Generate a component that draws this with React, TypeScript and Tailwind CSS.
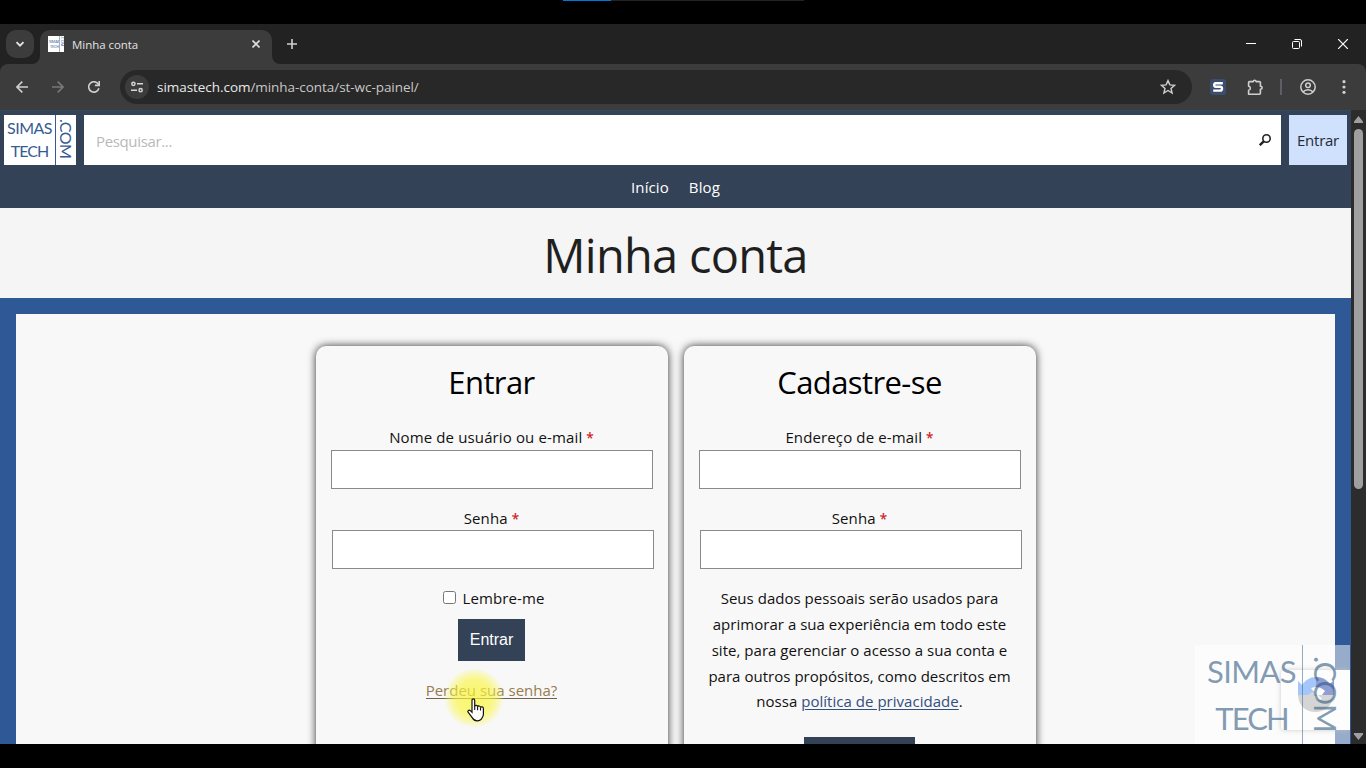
import type { ReactNode } from "react";

function TabStrip() {
  return (
    <div className="flex h-10 bg-[#222222]">
      <div className="flex w-10 items-start justify-start pl-1.5 pt-1.5">
        <button className="flex size-7 items-center justify-center rounded-[10px] bg-[#3c3c3c]">
          <svg width="10" height="8" viewBox="0 0 10 8" fill="none" stroke="#e3e3e3" strokeWidth="1.9">
            <path d="M1.500 2.200L5 5.700l3.500-3.500" />
          </svg>
        </button>
      </div>
      <div className="relative mt-1.5 flex h-[34px] w-[232px] items-start rounded-t-[10px] bg-[#3c3c3c] pl-2 pt-1.5">
        <svg className="absolute -left-2 bottom-0" width="8" height="8">
          <path d="M8 0v8H0a8 8 0 0 0 8-8z" fill="#3c3c3c" />
        </svg>
        <svg className="absolute -right-2 bottom-0" width="8" height="8">
          <path d="M0 0v8h8a8 8 0 0 1-8-8z" fill="#3c3c3c" />
        </svg>
        <div className="flex size-4 overflow-hidden bg-white text-[#6583ad]">
          <div className="flex w-[11px] flex-col justify-center pl-px text-[4px] font-semibold leading-[5px] tracking-[-0.3px]">
            <span>SIMAS</span>
            <span className="pl-px">TECH</span>
          </div>
          <span className="flex w-[5px] items-center border-l border-[#9db0ca] text-[4px] font-semibold leading-[4px] [writing-mode:vertical-rl]">
            .COM
          </span>
        </div>
        <span className="ml-2 w-[180px] whitespace-nowrap pt-px text-[11.5px] leading-4 tracking-[-0.05px] text-[#e3e3e3]">
          Minha conta
        </span>
        <svg className="mt-1 shrink-0" width="8" height="8" viewBox="0 0 8 8" stroke="#dedede" strokeWidth="1.6">
          <path d="M.5.5l7 7M7.500.5l-7 7" />
        </svg>
      </div>
      <svg className="ml-[15px] mt-[15px]" width="10" height="10" viewBox="0 0 10 10" stroke="#d0d0d0" strokeWidth="1.6">
        <path d="M5 0v10M0 5h10" />
      </svg>
      <div className="ml-auto flex gap-9 pr-[18px] pt-[15px]">
        <svg width="10" height="10" stroke="#fff">
          <path d="M0 4.500h10" />
        </svg>
        <svg width="10" height="10" fill="none" stroke="#fff">
          <rect x=".5" y="2.500" width="7" height="7" rx="1" />
          <path d="M2.500.5H8A1.500 1.500 0 0 1 9.500 2v5.500" />
        </svg>
        <svg width="10" height="10" stroke="#fff" strokeWidth="1.200">
          <path d="M0 0l10 10M10 0L0 10" />
        </svg>
      </div>
    </div>
  );
}

function Toolbar() {
  return (
    <div className="bg-[#222222]">
      <div className="flex h-[46px] items-center rounded-t-lg bg-[#3c3c3c] pl-4 pr-[15px]">
        <svg width="12" height="12" viewBox="0 0 12 12" fill="none" stroke="#cfcfcf" strokeWidth="1.6">
          <path d="M12 6H1M6.300.6L.9 6l5.400 5.400" />
        </svg>
        <svg className="ml-6" width="12" height="12" viewBox="0 0 12 12" fill="none" stroke="#787878" strokeWidth="1.6">
          <path d="M0 6h11M5.700.6L11.100 6l-5.400 5.400" />
        </svg>
        <svg className="ml-6" width="12" height="12" viewBox="0 0 12 12" fill="none" stroke="#cfcfcf" strokeWidth="1.6">
          <path d="M10.900 7.300A5.200 5.200 0 1 1 9.900 2.600L11 4.200" />
          <path d="M11.200 0v4.400H6.900" />
        </svg>
        <div className="ml-5 flex h-[34px] w-[1072px] items-center rounded-full bg-[#282828] pl-[5px] pr-4">
          <div className="flex size-6 items-center justify-center rounded-full bg-[#3c3c3c]">
            <svg width="12" height="12" viewBox="0 0 12 12" fill="none" stroke="#d6d6d6" strokeWidth="1.500">
              <circle cx="2.400" cy="2.800" r="1.600" />
              <path d="M6 2.800h6M0 9.200h6" />
              <circle cx="9.600" cy="9.200" r="1.600" />
            </svg>
          </div>
          <span className="ml-2 whitespace-nowrap text-[13.5px] leading-5 tracking-[-0.05px] text-[#c7c7c7]">
            <span className="text-[#e8e8e8]">simastech.com</span>/minha-conta/st-wc-painel/
          </span>
          <svg className="ml-auto" width="16" height="16" viewBox="0 0 16 16" fill="none" stroke="#cfcfcf" strokeWidth="1.400">
            <path d="M8 1.600l1.900 4.300 4.700.4-3.600 3.100 1.100 4.600L8 11.500 3.900 14 5 9.400 1.400 6.300l4.700-.4z" />
          </svg>
        </div>
        <svg className="ml-[18px]" width="16" height="16" viewBox="0 0 16 16">
          <rect width="16" height="16" rx="3" fill="#3b4e70" />
          <path
            d="M12.800 4.200H5.800Q4.200 4.200 4.200 6T5.800 7.800h4.400q1.800 0 1.800 1.900t-1.800 1.900H3.200"
            fill="none"
            stroke="#fff"
            strokeWidth="2.400"
          />
        </svg>
        <svg className="ml-[21px]" width="17" height="17" viewBox="0 0 17 17" fill="none" stroke="#cfcfcf" strokeWidth="1.600">
          <path
            d="M2.600 2.600h3.700C6.300.8 9 .8 9 2.600h3.400q1 0 1 1v3.600c2.300 0 2.300 3 0 3v4q0 1-1 1H1.600V11.300c2.300-.2 2.300-3.900 0-4.100V3.600q0-1 1-1z"
            strokeLinejoin="round"
          />
        </svg>
        <div className="ml-4 h-4 w-0.5 bg-[#5c5f63]" />
        <svg className="ml-[18px]" width="16" height="16" viewBox="0 0 16 16" fill="none" stroke="#cfcfcf" strokeWidth="1.500">
          <circle cx="8" cy="8" r="7.200" />
          <circle cx="8" cy="6.200" r="2.300" />
          <path d="M3 13c2.500-3 7.500-3 10 0" />
        </svg>
        <svg className="ml-[26px]" width="4" height="14" fill="#cfcfcf">
          <circle cx="2" cy="1.700" r="1.600" />
          <circle cx="2" cy="7" r="1.600" />
          <circle cx="2" cy="12.300" r="1.600" />
        </svg>
      </div>
    </div>
  );
}

function SiteHeader() {
  return (
    <header className="bg-[#334257]">
      <div className="flex h-[55px] gap-2 border-t border-[#34475f] px-1 pt-1">
        <div className="flex h-[50px] w-[72px] shrink-0 bg-white font-[Lato,sans-serif] text-[#365b91]">
          <div className="flex w-[51px] flex-col items-center pt-px text-[16px] leading-[23px]">
            <span className="tracking-[-0.5px]">SIMAS</span>
            <span className="tracking-[-0.9px]">TECH</span>
          </div>
          <div className="flex w-[21px] items-center justify-center border-l border-[#365b91]">
            <span className="pb-0.5 text-[16px] leading-[20px] tracking-[-0.6px] [writing-mode:vertical-rl]">.COM</span>
          </div>
        </div>
        <div className="flex h-[50px] flex-1 items-center justify-between bg-white pl-3 pr-2.5">
          <span className="pt-0.5 text-[15px] tracking-[-0.35px] text-[#b9b9b9]">Pesquisar...</span>
          <svg width="12" height="12" viewBox="0 0 12 12" fill="none" stroke="#222">
            <circle cx="7.500" cy="4.500" r="3.700" strokeWidth="1.600" />
            <path d="M4.700 7.400L.8 11.200" strokeWidth="2.400" />
          </svg>
        </div>
        <div className="flex h-[50px] w-[58px] items-center justify-center bg-[#cfe1fd] text-[15px] tracking-[-0.25px] text-[#252b33]">
          Entrar
        </div>
      </div>
      <nav className="flex h-[43px] items-center justify-center gap-5 pb-px pt-0.5 text-[15px] tracking-[0.1px] text-white">
        <span>Início</span>
        <span>Blog</span>
      </nav>
    </header>
  );
}

function Field({ label, shift }: { label: string; shift?: boolean }) {
  return (
    <div className="mb-[15px] flex flex-col items-center">
      <span
        className={
          shift
            ? "h-[26px] whitespace-nowrap pt-px text-[15px] leading-[26px] tracking-[0.13px]"
            : "h-[26px] whitespace-nowrap text-[15px] leading-[26px] tracking-[0.13px]"
        }
      >
        {label} <span className="text-[13.5px] font-semibold leading-none text-[#d01f26]">*</span>
      </span>
      <div
        className={
          shift
            ? "ml-0.5 h-[39px] w-[322px] border border-[#8a8a8a] bg-white"
            : "h-[39px] w-[322px] border border-[#8a8a8a] bg-white"
        }
      />
    </div>
  );
}

function Card({ title, children }: { title: string; children: ReactNode }) {
  return (
    <section className="h-[480px] w-[352px] rounded-t-[10px] bg-[#f8f8f8] shadow-[0_0_8px_rgba(0,0,0,0.8)]">
      <h2 className="h-[78px] whitespace-nowrap pt-[14px] text-center text-[31px] leading-[44px] tracking-[-0.6px] text-black">
        {title}
      </h2>
      {children}
    </section>
  );
}

function LoginCard() {
  return (
    <Card title="Entrar">
      <Field label="Nome de usuário ou e-mail" />
      <Field label="Senha" shift />
      <div className="flex h-[34px] items-start justify-center gap-[7px] pl-1 text-[15px] leading-[28px] tracking-[0.1px]">
        <span className="mt-[7px] size-[13px] rounded-[2.5px] border border-[#767676] bg-white" />
        <span>Lembre-me</span>
      </div>
      <div className="mt-px flex flex-col items-center">
        <button className="h-[42px] w-[67px] bg-[#334257] font-['Liberation_Sans',Arial,sans-serif] text-base text-white">
          Entrar
        </button>
        <span className="relative mt-5 h-[18px] whitespace-nowrap border-b border-[#6f6448] text-[15px] leading-[19px] text-[#967c4e]">
          Perdeu sua senha?
          <span className="absolute -top-[13px] left-[18px] size-[60px] rounded-full bg-[radial-gradient(closest-side,rgba(250,245,50,0.72)_0%,rgba(250,246,60,0.62)_60%,rgba(250,246,90,0.4)_82%,rgba(250,246,120,0)_100%)]" />
          <svg className="absolute left-[41px] top-[17px]" width="18" height="24" viewBox="0 0 18 24">
            <path
              d="M5 2.200C5 .5 7.700.5 7.700 2.200v6.200c.3-1.700 3-1.400 2.900.4.500-1.400 2.900-1 2.900.7.600-1.100 2.900-.8 2.900 1v5.700c0 1.600-.6 2.500-1.300 3.600-.8 2-2.300 3-5.100 3-2.500 0-3.600-1.100-4.800-3.200L1.100 14.200c-.9-1.500 1-2.700 2.300-1.500L5 14.300z"
              fill="#fff"
              stroke="#111"
              strokeWidth="1.200"
            />
            <path d="M7.700 8v4M10.600 8.800v3.400M13.500 9.500v3" stroke="#111" strokeWidth="1.100" />
          </svg>
        </span>
      </div>
    </Card>
  );
}

function RegisterCard() {
  return (
    <Card title="Cadastre-se">
      <Field label="Endereço de e-mail" />
      <Field label="Senha" shift />
      <p className="whitespace-nowrap pt-[1.8px] text-center text-[15px] leading-[25.9px] tracking-[0.03px]">
        Seus dados pessoais serão usados para
        <br />
        aprimorar a sua experiência em todo este
        <br />
        site, para gerenciar o acesso a sua conta e
        <br />
        para outros propósitos, como descritos em
        <br />
        nossa <a className="text-[#334f7d] underline underline-offset-2">política de privacidade</a>.
      </p>
      <div className="mx-auto mt-[21.2px] h-[42px] w-[111px] bg-[#334257]" />
    </Card>
  );
}

function Scrollbar() {
  return (
    <div className="flex w-[15px] shrink-0 flex-col items-center bg-[#2c2c2c] pt-[6px]">
      <svg width="9" height="7" fill="#9f9f9f">
        <path d="M4.500 0L9 5.500V7H0V5.500z" />
      </svg>
      <div className="mt-[6px] h-[360px] w-[9px] rounded-full bg-[#9f9f9f]" />
      <svg className="mb-[4px] mt-auto" width="9" height="7" fill="#9f9f9f">
        <path d="M0 0h9v1.500L4.500 7 0 1.500z" />
      </svg>
    </div>
  );
}

// reCAPTCHA badge with the channel logo laid over it
function Watermark() {
  return (
    <div className="absolute left-[1195px] top-[645px] h-[99px] w-[155px] overflow-hidden">
      <div className="absolute left-[86px] top-[25px] flex h-[60px] w-[69px] items-start rounded-l-sm bg-[#fafafa] pl-4 pt-1.5 shadow-[0_0_5px_rgba(128,128,128,0.8)]">
        <svg width="38" height="38" viewBox="0 0 38 38">
          <path d="M1 19V5l4 4C8.500 4 13 1 19 1v10c-2 0-4 .5-5 1.500l4 4-3 2.500z" fill="#4a8df5" />
          <path d="M19 1c6 0 10.500 2.500 14 7l4-4v15H25l3-4c-2-2-5-4-9-4z" fill="#1c3aa9" />
          <path d="M1 19h10l4-3 6 4h-4c1 4 4 5 8 3l-4-4h16c-1 4-2 7-4 10-8 11-31 10-32-10z" fill="#ababab" />
        </svg>
      </div>
      <div className="absolute inset-0 flex bg-white/50 font-[Lato,sans-serif] text-[#315a80]/60">
        <div className="flex w-[107px] flex-col items-center pl-[6px] pt-[3px] text-[31px] leading-[47px]">
          <span className="tracking-[-0.6px]">SIMAS</span>
          <span className="tracking-[-1.9px]">TECH</span>
        </div>
        <div className="flex flex-1 items-center justify-center border-l border-[#315a80]/50 pr-0.5">
          <span className="pb-0.5 text-[31px] leading-[36px] tracking-[-1.2px] [writing-mode:vertical-rl]">.COM</span>
        </div>
      </div>
    </div>
  );
}

export default function App() {
  return (
    <div className="relative flex h-[768px] w-[1366px] flex-col overflow-hidden bg-black font-['Open_Sans','Noto_Sans',sans-serif] text-[#111]">
      <div className="h-6 shrink-0 pl-[563px]">
        <div className="flex h-px w-[241px] bg-[#222]">
          <div className="w-12 bg-[#0078d7]" />
        </div>
      </div>
      <TabStrip />
      <Toolbar />
      <div className="flex h-[634px] overflow-hidden">
        <div className="w-[1351px]">
          <SiteHeader />
          <div className="flex h-[90px] items-center justify-center bg-[#f5f5f5] pt-1">
            <h1 className="whitespace-nowrap text-[47px] leading-none tracking-[-0.75px] text-[#1f1f1f]">Minha conta</h1>
          </div>
          <main className="flex h-[600px] justify-center gap-4 border-[16px] border-[#2f5896] bg-[#f8f8f8] pt-8">
            <LoginCard />
            <RegisterCard />
          </main>
        </div>
        <Scrollbar />
      </div>
      <div className="h-6 shrink-0 bg-black" />
      <Watermark />
    </div>
  );
}
